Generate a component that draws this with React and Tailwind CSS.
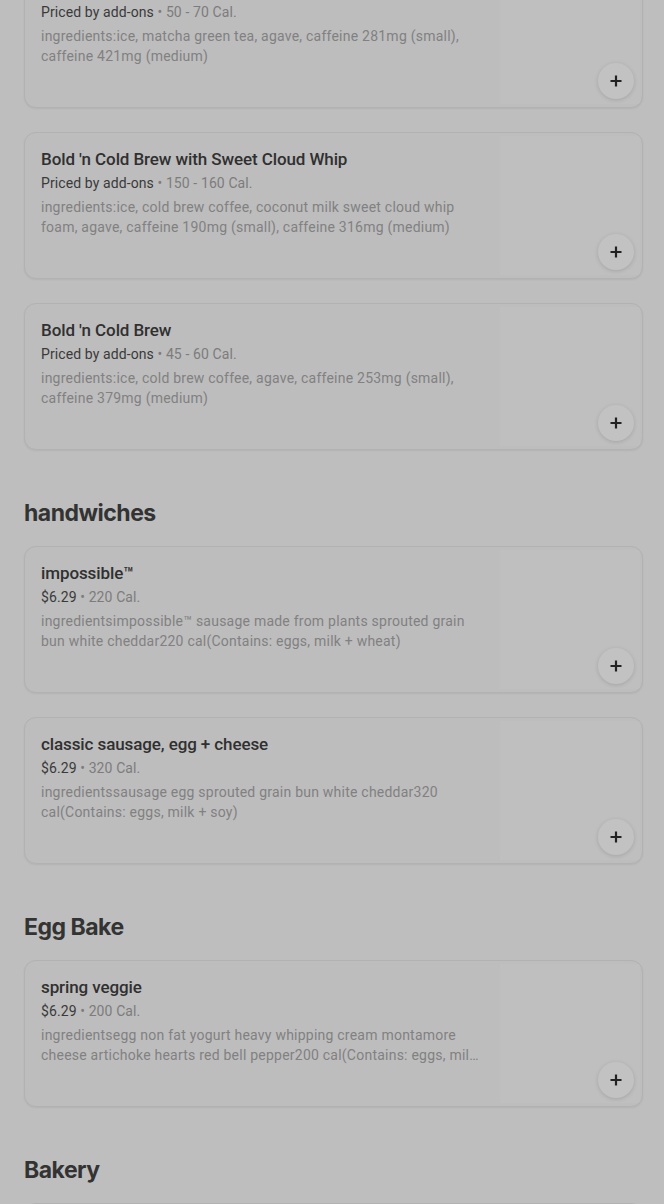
import React from "react";

const sections = [
  {
    title: null,
    items: [
      {
        name: "Iced Matcha Green Tea",
        price: "Priced by add-ons",
        cal: "50 - 70 Cal.",
        desc: "ingredients:ice, matcha green tea, agave, caffeine 281mg (small), caffeine 421mg (medium)",
      },
      {
        name: "Bold 'n Cold Brew with Sweet Cloud Whip",
        price: "Priced by add-ons",
        cal: "150 - 160 Cal.",
        desc: "ingredients:ice, cold brew coffee, coconut milk sweet cloud whip foam, agave, caffeine 190mg (small), caffeine 316mg (medium)",
      },
      {
        name: "Bold 'n Cold Brew",
        price: "Priced by add-ons",
        cal: "45 - 60 Cal.",
        desc: "ingredients:ice, cold brew coffee, agave, caffeine 253mg (small), caffeine 379mg (medium)",
      },
    ],
  },
  {
    title: "handwiches",
    items: [
      {
        name: "impossible™",
        price: "$6.29",
        cal: "220 Cal.",
        desc: "ingredientsimpossible™ sausage made from plants sprouted grain bun white cheddar220 cal(Contains: eggs, milk + wheat)",
      },
      {
        name: "classic sausage, egg + cheese",
        price: "$6.29",
        cal: "320 Cal.",
        desc: "ingredientssausage egg sprouted grain bun white cheddar320 cal(Contains: eggs, milk + soy)",
      },
    ],
  },
  {
    title: "Egg Bake",
    items: [
      {
        name: "spring veggie",
        price: "$6.29",
        cal: "200 Cal.",
        desc: "ingredientsegg non fat yogurt heavy whipping cream montamore cheese artichoke hearts red bell pepper200 cal(Contains: eggs, milk + wheat)",
      },
    ],
  },
  {
    title: "Bakery",
    items: [
      {
        name: "plain croissant",
        price: "$3.79",
        cal: "260 Cal.",
        desc: "ingredientsbutter croissant",
      },
    ],
  },
];

function Plus() {
  return (
    <svg width="14" height="14" viewBox="0 0 14 14" fill="none">
      <path d="M7 1.5v11M1.5 7h11" stroke="#222" strokeWidth="2.2" />
    </svg>
  );
}

function Card({ item }) {
  return (
    <div className="relative flex h-[147px] overflow-hidden rounded-xl border border-[#b2b2b2] bg-[#bdbdbd] shadow-[0_1px_2px_rgba(0,0,0,0.06)]">
      <div className="flex min-w-0 flex-1 flex-col pl-4 pr-4 pt-4">
        <div className="truncate text-[17px] leading-5 font-medium tracking-[-0.1px] text-[#303030]">{item.name}</div>
        <div className="mt-1 text-[14px] leading-5 tracking-[0.1px] text-[#3a3a3a]">
          {item.price}
          <span className="text-[#7c7c7c]"> • {item.cal}</span>
        </div>
        <div className="mt-1 line-clamp-2 max-w-[440px] text-[14px] leading-5 tracking-[0.23px] text-[#818181]">{item.desc}</div>
      </div>
      <div className="my-[3px] mr-[2px] w-[140px] shrink-0 bg-[#bfbfbf]" />
      <button className="absolute right-[8px] bottom-[8px] flex h-9 w-9 items-center justify-center rounded-full bg-[#c2c2c2] shadow-[0_1px_4px_rgba(0,0,0,0.14)]">
        <Plus />
      </button>
    </div>
  );
}

export default function App() {
  return (
    <div
      className="min-h-[1204px] overflow-hidden bg-[#bebebe] pl-6 pr-[21px]"
      style={{ fontFamily: "Roboto, 'Liberation Sans', sans-serif" }}
    >
      <div className="-mt-[39px] flex flex-col">
        {sections.map((s, i) => (
          <div key={i} className="flex flex-col">
            {s.title && (
              <h2
                className="mt-[47px] mb-[17px] h-8 text-[23px] leading-8 font-bold tracking-[-0.5px] text-[#333333]"
                style={{ fontFamily: "Inter, 'Liberation Sans', sans-serif" }}
              >
                {s.title}
              </h2>
            )}
            <div className="flex flex-col gap-6">
              {s.items.map((it, j) => (
                <Card key={j} item={it} />
              ))}
            </div>
          </div>
        ))}
      </div>
    </div>
  );
}
